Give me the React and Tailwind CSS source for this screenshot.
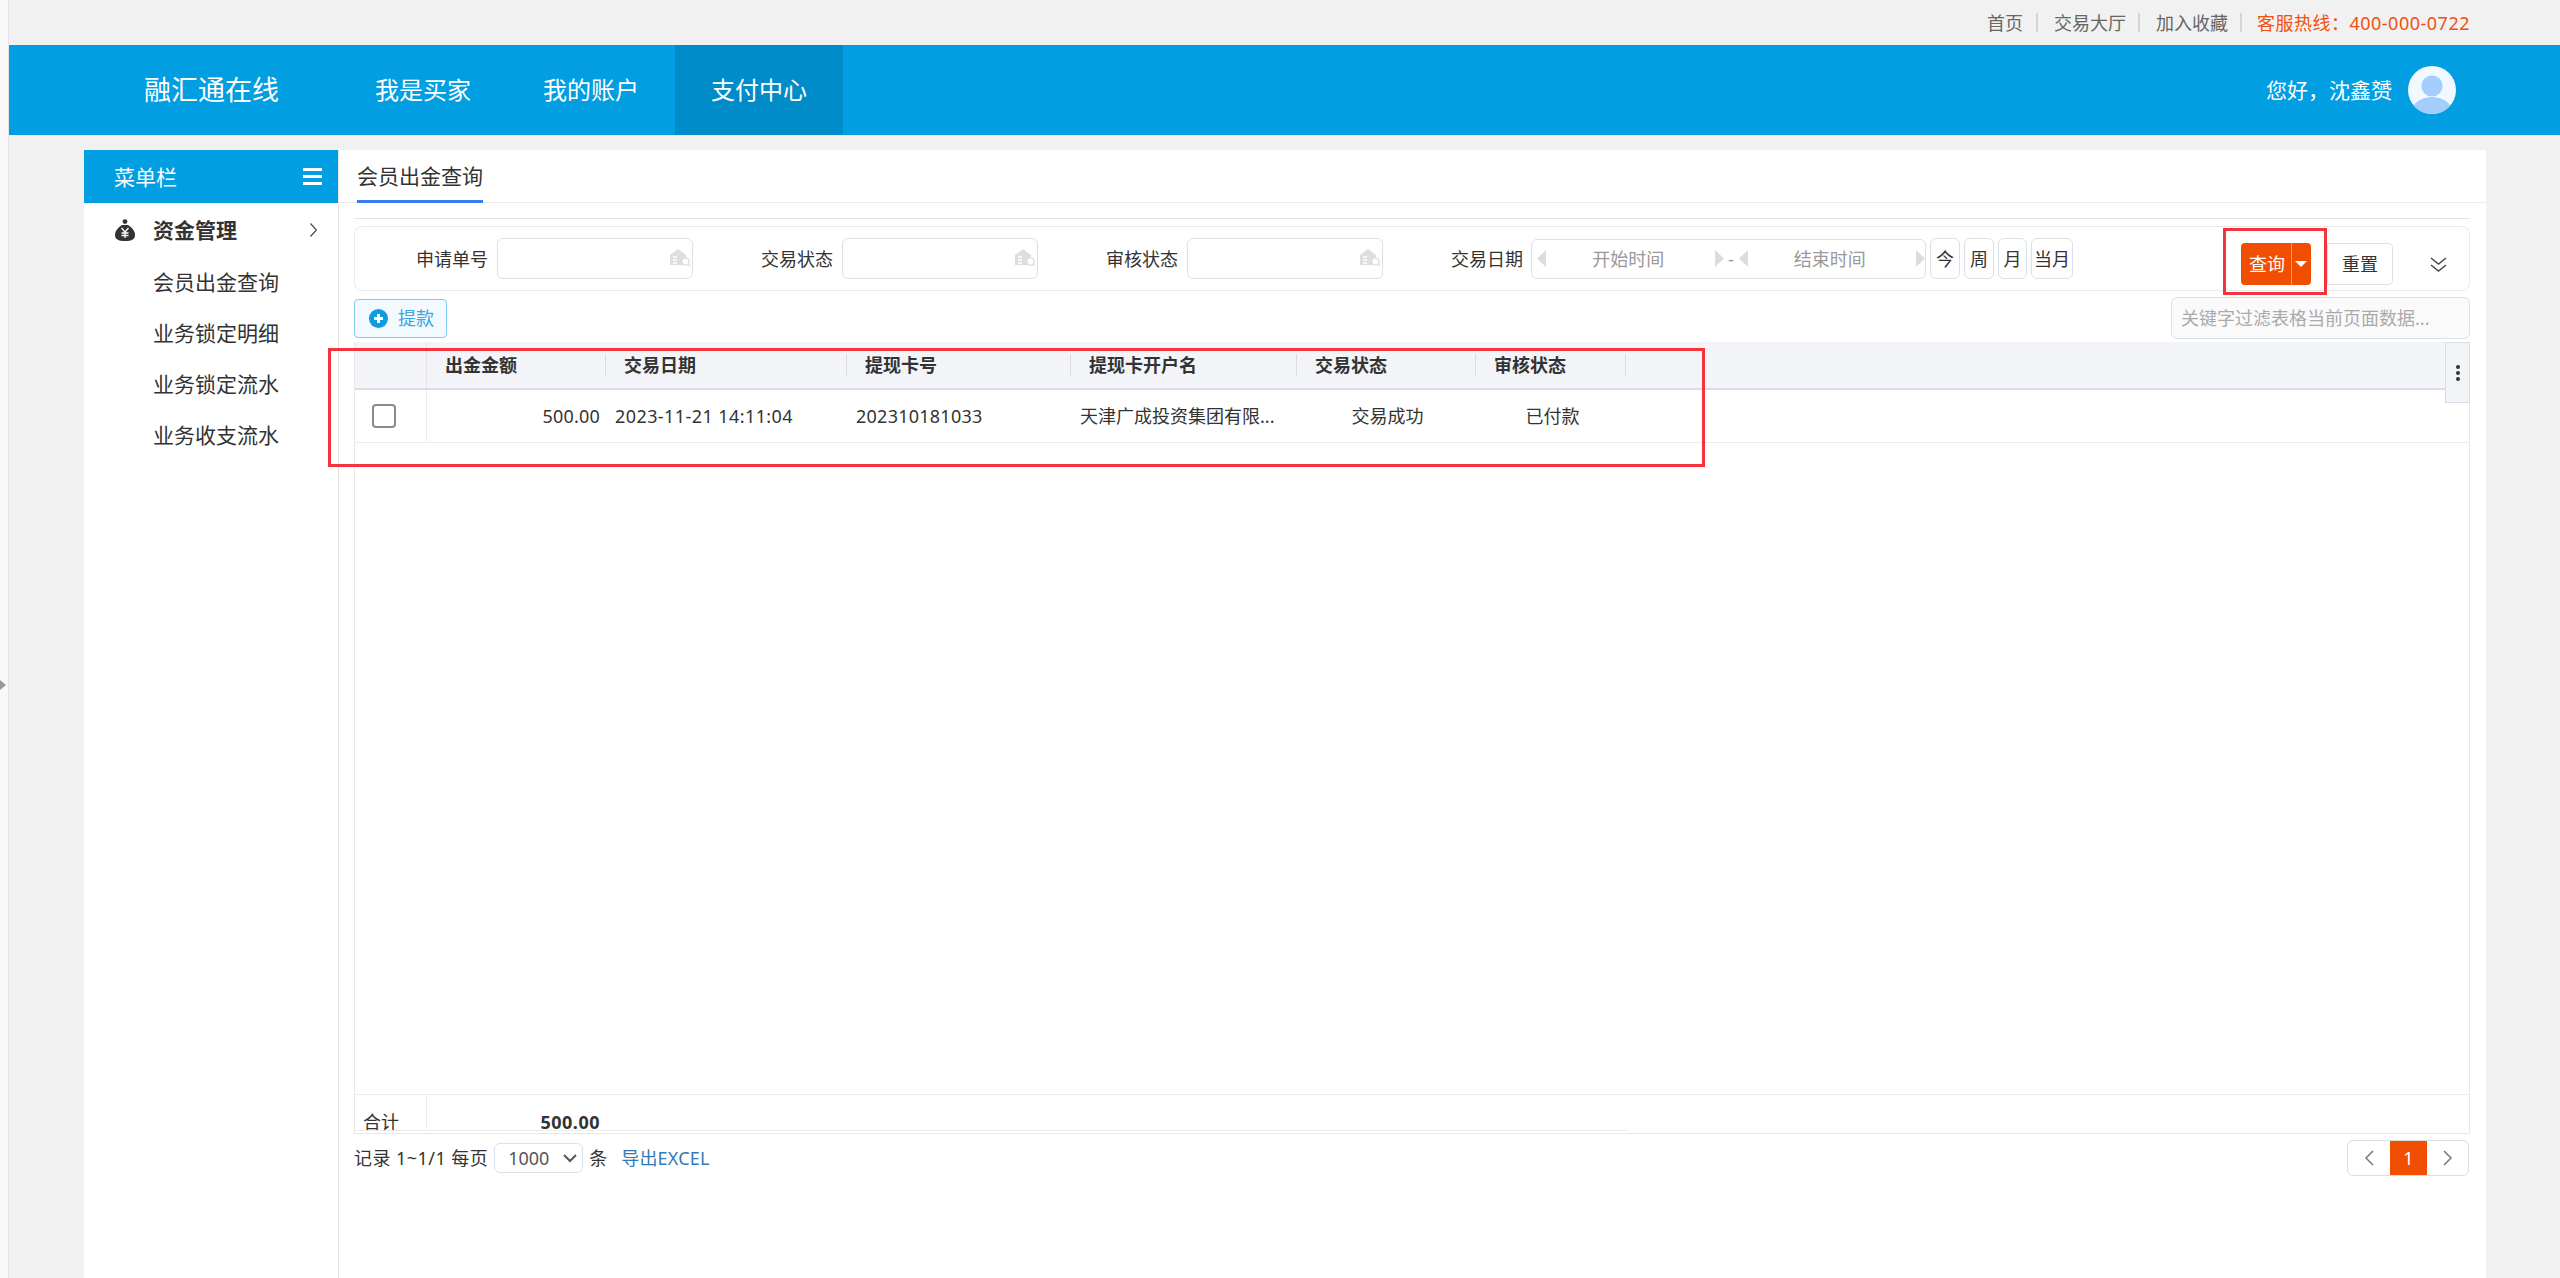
const navItems = ["我是买家", "我的账户", "支付中心"];
const menuItems = ["会员出金查询", "业务锁定明细", "业务锁定流水", "业务收支流水"];

const columns = [
  { title: "出金金额", width: "w-[179px]", value: "500.00", cell: "justify-end pr-[6px] tracking-[0.2px]" },
  { title: "交易日期", width: "w-[241px]", value: "2023-11-21 14:11:04", cell: "pl-[9px] tracking-[0.42px]" },
  { title: "提现卡号", width: "w-[224px]", value: "202310181033", cell: "pl-[9px] tracking-[0.25px]" },
  { title: "提现卡开户名", width: "w-[226px]", value: "天津广成投资集团有限...", cell: "pl-[9px]" },
  { title: "交易状态", width: "w-[179px]", value: "交易成功", cell: "justify-center pl-[2px]" },
  { title: "审核状态", width: "w-[150px]", value: "已付款", cell: "justify-center pl-[3px]" },
];

const BankIcon = () => (
  <svg width="22" height="19" viewBox="0 0 22 19" className="absolute right-[1px] top-[9px]">
    <path d="M1 7 9 1l8 6v10H1z" fill="#dedede" />
    <path d="M4 9h4M4 12h4M4 15h4" stroke="#fff" strokeWidth="1.3" />
    <circle cx="16.5" cy="13.5" r="3.6" fill="#fff" stroke="#dedede" strokeWidth="1.4" />
    <path d="m19 16 2 2" stroke="#dedede" strokeWidth="1.4" />
  </svg>
);

const Triangle = ({ dir }) => (
  <svg width="9" height="17" viewBox="0 0 9 17" className="shrink-0">
    <path d={dir === "left" ? "M9 0v17L0 8.5z" : "M0 0v17l9-8.5z"} fill="#dcdcdc" />
  </svg>
);

const Field = ({ label }) => (
  <div className="flex items-center">
    <span className="w-[133px] text-right">{label}</span>
    <div className="relative ml-[9px] h-[41px] w-[196px] rounded-md border border-[#dce0e8] bg-white">
      <BankIcon />
    </div>
  </div>
);

const DatePart = ({ text }) => (
  <div className="flex flex-1 items-center">
    <Triangle dir="left" />
    <span className="flex-1 pr-[4px] text-center text-[#999]">{text}</span>
    <Triangle dir="right" />
  </div>
);

const MoneyBag = () => (
  <svg width="20" height="22" viewBox="0 0 20 22">
    <circle cx="10" cy="2.6" r="2.4" fill="#333" />
    <path d="M7 6h6c4 2.5 7 6 7 10 0 4-3 6-10 6S0 20 0 16c0-4 3-7.5 7-10z" fill="#333" />
    <path d="m6.5 9 3.5 4 3.5-4M10 13v6M6.5 14h7M6.5 16.500h7" fill="none" stroke="#fff" strokeWidth="1.3" />
  </svg>
);

const App = () => {
  return (
    <div className="relative flex h-[1278px] w-[2560px] overflow-hidden bg-[#f1f1f1] font-['Noto_Sans','Noto_Sans_CJK_SC',sans-serif] text-lg text-[#333]">
      {/* collapsed left rail */}
      <div className="flex w-[9px] shrink-0 items-center border-r border-[#e6e6e6] bg-[#f8f8f8]">
        <svg width="6" height="10" viewBox="0 0 6 10" className="mt-[92px]">
          <path d="M0 0l6 5-6 5z" fill="#999" />
        </svg>
      </div>

      <div className="flex min-w-0 flex-1 flex-col">
        {/* top links */}
        <div className="flex h-[45px] shrink-0 items-center justify-end pr-[90px] text-[#666]">
          <span>首页</span>
          <span className="ml-[13px] mr-[16px] h-[19px] w-[2px] bg-[#d4d4d4]" />
          <span>交易大厅</span>
          <span className="ml-[12px] mr-[16px] h-[19px] w-[2px] bg-[#d4d4d4]" />
          <span>加入收藏</span>
          <span className="ml-[12px] mr-[15px] h-[19px] w-[2px] bg-[#d4d4d4]" />
          <span className="tracking-[0.5px] text-[#f0500f]">客服热线：400-000-0722</span>
        </div>

        {/* header */}
        <header className="flex h-[90px] shrink-0 items-stretch bg-[#019ee1] pl-[135px] pr-[104px] text-white">
          <div className="flex w-[195px] items-center text-[27px]">融汇通在线</div>
          {navItems.map((item) => (
            <div
              key={item}
              className={`flex w-[168px] items-center justify-center text-2xl ${item === "支付中心" ? "bg-[#008cc9]" : ""}`}
            >
              {item}
            </div>
          ))}
          <div className="ml-auto flex items-center gap-[16px]">
            <span className="text-[21px]">您好，沈鑫赟</span>
            <svg width="48" height="48" viewBox="0 0 48 48">
              <defs>
                <clipPath id="avatarClip">
                  <circle cx="24" cy="24" r="24" />
                </clipPath>
              </defs>
              <circle cx="24" cy="24" r="24" fill="#f2f8ff" />
              <g clipPath="url(#avatarClip)" fill="#a3cdfd">
                <circle cx="24" cy="20" r="10.5" />
                <ellipse cx="24" cy="47" rx="21" ry="16" />
              </g>
            </svg>
          </div>
        </header>

        <main className="flex min-h-0 flex-1 pl-[75px] pr-[74px] pt-[15px]">
          {/* sidebar */}
          <aside className="w-[255px] shrink-0 border-r border-[#e3e3e3] bg-white">
            <div className="flex h-[53px] items-center justify-between bg-[#019ee1] pl-[30px] pr-[16px] text-[21px] text-white">
              <span className="pt-[2px]">菜单栏</span>
              <div className="flex w-[19px] flex-col gap-[4px]">
                <span className="h-[3px] bg-white" />
                <span className="h-[3px] bg-white" />
                <span className="h-[3px] bg-white" />
              </div>
            </div>
            <div className="flex h-[54px] items-center pl-[31px] pr-[21px] text-[21px]">
              <MoneyBag />
              <span className="ml-[18px] font-bold">资金管理</span>
              <svg width="7" height="14" viewBox="0 0 7 14" className="ml-auto">
                <path d="m.5.5 6 6.500-6 6.500" fill="none" stroke="#444" strokeWidth="1.2" />
              </svg>
            </div>
            {menuItems.map((item) => (
              <div key={item} className="flex h-[51px] items-center pl-[69px] text-[21px]">
                {item}
              </div>
            ))}
          </aside>

          {/* content */}
          <section className="flex min-w-0 flex-1 flex-col bg-white">
            <div className="flex h-[53px] shrink-0 items-stretch border-b border-[#ececec] pl-[18px]">
              <div className="-mb-px flex items-center border-b-[3px] border-[#3b7bf0] pt-[3px] text-[21px]">会员出金查询</div>
            </div>

            <div className="ml-[15px] mr-[16px] flex flex-1 flex-col">
              <div className="mt-[15px] h-px shrink-0 bg-[#e4e4e4]" />

              {/* filter box */}
              <div className="mt-[7px] flex h-[65px] shrink-0 items-start rounded-lg border border-[#eaeaea]">
                <div className="flex gap-[7px] pt-[11px]">
                  <Field label="申请单号" />
                  <Field label="交易状态" />
                  <Field label="审核状态" />
                  <div className="flex items-center">
                    <span className="w-[133px] text-right">交易日期</span>
                    <div className="ml-[8px] flex h-[40px] w-[395px] items-center rounded-md border border-[#dce0e8] pl-[5px]">
                      <DatePart text="开始时间" />
                      <span className="mx-[3px] w-[9px] text-center text-[#999]">-</span>
                      <DatePart text="结束时间" />
                    </div>
                    <div className="ml-[4px] flex gap-[4px]">
                      <div className="flex h-[41px] w-[30px] items-center justify-center rounded-md border border-[#dce0e8]">今</div>
                      <div className="flex h-[41px] w-[30px] items-center justify-center rounded-md border border-[#dce0e8]">周</div>
                      <div className="flex h-[41px] w-[29px] items-center justify-center rounded-md border border-[#dce0e8]">月</div>
                      <div className="flex h-[41px] w-[42px] items-center justify-center rounded-md border border-[#dce0e8]">当月</div>
                    </div>
                  </div>
                </div>
                <div className="ml-auto flex items-center pr-[22px] pt-[16px]">
                  <div className="flex h-[42px] w-[70px] items-center rounded-[4px] bg-[#f04e00] text-white">
                    <span className="w-[50px] pl-[2px] text-center">查询</span>
                    <span className="h-full w-px bg-[#f79a6c]" />
                    <svg width="12" height="6" viewBox="0 0 12 6" className="ml-[3px]">
                      <path d="M0 0h12L6 6z" fill="#fff" />
                    </svg>
                  </div>
                  <div className="ml-[16px] flex h-[42px] w-[66px] items-center justify-center rounded-r-[4px] border border-[#dce0e8]">重置</div>
                  <svg width="17" height="15" viewBox="0 0 17 15" className="ml-[37px]">
                    <path d="m1 1 7.5 6L16 1M1 8l7.5 6L16 8" fill="none" stroke="#444" strokeWidth="1.4" />
                  </svg>
                </div>
              </div>

              {/* toolbar */}
              <div className="mt-[6px] flex h-[42px] shrink-0 items-center justify-between">
                <button className="flex h-[39px] w-[93px] items-center rounded-[4px] border border-[#7fcdf3] bg-[#f2faff] pl-[14px] text-[#3aa5e6]">
                  <svg width="19" height="19" viewBox="0 0 19 19">
                    <circle cx="9.5" cy="9.5" r="9.5" fill="#0f9be0" />
                    <path d="M9.5 5v9M5 9.5h9" stroke="#fff" strokeWidth="3" />
                  </svg>
                  <span className="ml-[10px]">提款</span>
                </button>
                <input
                  readOnly
                  placeholder="关键字过滤表格当前页面数据..."
                  className="h-[42px] w-[299px] rounded-md border border-[#dce0e8] bg-[#fafafa] pl-[9px] placeholder:text-[#aaa]"
                />
              </div>

              {/* table */}
              <div className="relative mt-[3px] flex h-[792px] shrink-0 flex-col border border-t-0 border-[#e8e8e8]">
                <div className="flex h-[48px] shrink-0 border-b-2 border-[#d9dde6] bg-[#f2f4f8]">
                  <div className="w-[72px] shrink-0 border-r border-[#e3e3e3]" />
                  {columns.map((col) => (
                    <div key={col.title} className={`${col.width} flex shrink-0 items-center`}>
                      <span className="flex h-[22px] w-full items-center border-r border-[#dcdcdc] pl-[18px] font-bold">{col.title}</span>
                    </div>
                  ))}
                </div>
                <div className="flex h-[53px] shrink-0 border-b border-[#ececec]">
                  <div className="flex w-[72px] shrink-0 items-center border-r border-[#ececec] pl-[17px]">
                    <span className="h-[24px] w-[24px] rounded-[4px] border-2 border-[#8a8a8a] bg-white" />
                  </div>
                  {columns.map((col) => (
                    <div key={col.title} className={`${col.width} ${col.cell} flex shrink-0 items-center`}>
                      {col.value}
                    </div>
                  ))}
                </div>
                <div className="flex-1" />
                <div className="flex h-[36px] shrink-0 border-t border-[#ececec]">
                  <div className="h-[35px] w-[72px] shrink-0 overflow-hidden border-r border-[#ececec] pl-[8px] leading-[55px]">合计</div>
                  <div className="h-[35px] w-[179px] shrink-0 overflow-hidden pr-[6px] text-right font-bold leading-[55px] tracking-[0.5px]">500.00</div>
                </div>
                <div className="h-[3px] w-[1273px] shrink-0 border-t border-[#ececec]" />
                {/* column menu tab */}
                <div className="absolute right-[-1px] top-0 flex h-[61px] w-[25px] flex-col items-center justify-center gap-[2px] border border-[#d9dde6] bg-[#f2f4f8]">
                  <span className="h-[4px] w-[4px] rounded-full bg-[#333]" />
                  <span className="h-[4px] w-[4px] rounded-full bg-[#333]" />
                  <span className="h-[4px] w-[4px] rounded-full bg-[#333]" />
                </div>
              </div>

              {/* pager */}
              <div className="mt-[6px] flex h-[36px] shrink-0 items-center">
                <span className="tracking-[0.45px]">记录 1~1/1 每页</span>
                <div className="relative ml-[6px] h-[30px] w-[89px]">
                  <select className="h-full w-full appearance-none rounded-md border border-[#dce0e8] bg-white pl-[13px] text-[#555]">
                    <option>1000</option>
                  </select>
                  <svg width="14" height="9" viewBox="0 0 14 9" className="pointer-events-none absolute right-[6px] top-[11px]">
                    <path d="m1 1 6 6 6-6" fill="none" stroke="#555" strokeWidth="2" />
                  </svg>
                </div>
                <span className="ml-[6px]">条</span>
                <span className="ml-[14px] tracking-[0.2px] text-[#337ab7]">导出EXCEL</span>
                <div className="ml-auto mr-px flex h-[36px] w-[122px] overflow-hidden rounded-md border border-[#ddd]">
                  <div className="flex w-[42px] items-center justify-center">
                    <svg width="10" height="16" viewBox="0 0 10 16">
                      <path d="M9 1 2 8l7 7" fill="none" stroke="#777" strokeWidth="1.5" />
                    </svg>
                  </div>
                  <div className="flex w-[37px] items-center justify-center bg-[#f04e00] text-white">1</div>
                  <div className="flex flex-1 items-center justify-center">
                    <svg width="10" height="16" viewBox="0 0 10 16">
                      <path d="m1 1 7 7-7 7" fill="none" stroke="#777" strokeWidth="1.5" />
                    </svg>
                  </div>
                </div>
              </div>
            </div>
          </section>
        </main>
      </div>

      {/* red annotation boxes drawn over the screenshot */}
      <div className="pointer-events-none absolute left-[2223px] top-[228px] h-[67px] w-[104px] border-[3px] border-[#f5333c]" />
      <div className="pointer-events-none absolute left-[328px] top-[348px] h-[119px] w-[1377px] border-[3px] border-[#f5333c]" />
    </div>
  );
};

export default App;
